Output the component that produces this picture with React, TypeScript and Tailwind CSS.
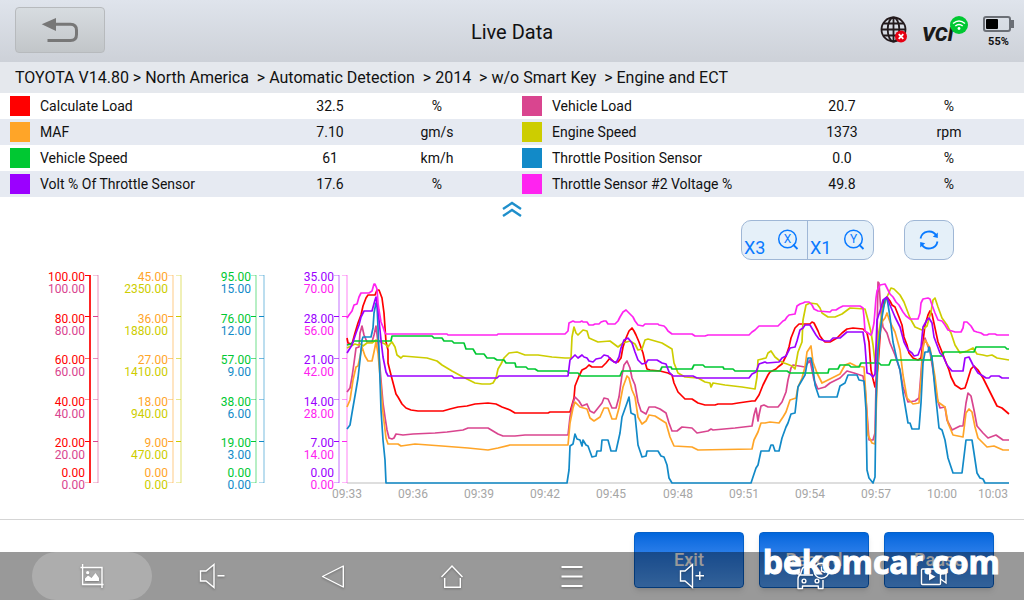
import type { ReactNode } from "react"
import clsx from "clsx"

type Reading = {
  name: string
  value: string
  unit: string
  swatch: string
}

const leftReadings: Reading[] = [
  { name: "Calculate Load", value: "32.5", unit: "%", swatch: "bg-[#ff0000]" },
  { name: "MAF", value: "7.10", unit: "gm/s", swatch: "bg-[#ffa528]" },
  { name: "Vehicle Speed", value: "61", unit: "km/h", swatch: "bg-[#00c832]" },
  { name: "Volt % Of Throttle Sensor", value: "17.6", unit: "%", swatch: "bg-[#9b00ff]" },
]

const rightReadings: Reading[] = [
  { name: "Vehicle Load", value: "20.7", unit: "%", swatch: "bg-[#d9458f]" },
  { name: "Engine Speed", value: "1373", unit: "rpm", swatch: "bg-[#cdcd00]" },
  { name: "Throttle Position Sensor", value: "0.0", unit: "%", swatch: "bg-[#128ac8]" },
  { name: "Throttle Sensor #2 Voltage %", value: "49.8", unit: "%", swatch: "bg-[#ff23f0]" },
]

// Each pair of axes shares one column of labels
const axes = [
  {
    x: 90,
    first: { color: "#ff0000", active: true, labels: ["100.00", "80.00", "60.00", "40.00", "20.00", "0.00"] },
    second: { color: "#d9458f", active: false, labels: ["100.00", "80.00", "60.00", "40.00", "20.00", "0.00"] },
  },
  {
    x: 173,
    first: { color: "#ffa528", active: false, labels: ["45.00", "36.00", "27.00", "18.00", "9.00", "0.00"] },
    second: { color: "#cdcd00", active: false, labels: ["2350.00", "1880.00", "1410.00", "940.00", "470.00", "0.00"] },
  },
  {
    x: 256,
    first: { color: "#00c832", active: false, labels: ["95.00", "76.00", "57.00", "38.00", "19.00", "0.00"] },
    second: { color: "#128ac8", active: false, labels: ["15.00", "12.00", "9.00", "6.00", "3.00", "0.00"] },
  },
  {
    x: 339,
    first: { color: "#9b00ff", active: false, labels: ["35.00", "28.00", "21.00", "14.00", "7.00", "0.00"] },
    second: { color: "#ff23f0", active: false, labels: ["70.00", "56.00", "42.00", "28.00", "14.00", "0.00"] },
  },
]

const ticks = [
  { y: 275.5, label: 281, opacity: 0.3 },
  { y: 316.5, label: 323, opacity: 1 },
  { y: 358.5, label: 364, opacity: 0.6 },
  { y: 399.5, label: 406, opacity: 0.45 },
  { y: 441.5, label: 447, opacity: 1 },
  { y: 482.5, label: 477, opacity: 0.3 },
]

const times = [
  { x: 347, text: "09:33" },
  { x: 413, text: "09:36" },
  { x: 479, text: "09:39" },
  { x: 545, text: "09:42" },
  { x: 611, text: "09:45" },
  { x: 678, text: "09:48" },
  { x: 744, text: "09:51" },
  { x: 810, text: "09:54" },
  { x: 876, text: "09:57" },
  { x: 942, text: "10:00" },
  { x: 993, text: "10:03" },
]

const traces = [
  {
    color: "#ff0000",
    points:
      "347,338 348,343 352,344 355,333 358,323 361,315 363,306 366,298 368,295 375,295 377,290 379,290 382,298 384,313 386,342 388,350 388,363 391,375 396,394 398,397 402,404 406,408 411,410 418,411 443,411 450,409 458,407 467,406 475,404 488,403 496,404 502,407 510,410 515,413 548,413 550,412 570,412 572,405 574,398 575,386 579,376 582,370 586,368 589,365 592,367 602,367 606,363 610,358 614,362 618,362 621,358 623,347 626,338 629,331 632,328 634,331 636,335 639,342 643,353 645,362 647,369 650,370 660,371 668,373 672,375 674,383 678,392 681,395 685,399 692,399 698,403 705,405 715,405 718,404 732,404 738,403 752,401 755,401 759,395 763,385 768,375 770,372 776,369 778,367 782,364 786,356 789,347 791,338 795,328 799,324 810,324 812,322 814,323 818,331 820,336 823,340 825,342 830,342 837,338 842,333 847,329 853,328 863,329 867,333 869,342 871,370 873,379 875,387 878,367 880,337 882,313 884,300 887,297 890,301 892,305 895,307 899,317 902,325 904,337 907,345 909,353 913,358 918,360 921,358 923,342 925,325 928,315 930,311 932,314 935,328 938,342 942,352 945,360 949,370 951,377 955,385 961,389 965,388 967,382 971,369 974,366 978,370 983,378 988,388 993,398 997,406 1002,408 1009,414",
  },
  {
    color: "#d9458f",
    points:
      "347,392 350,388 352,377 354,363 356,348 359,347 360,333 362,326 364,335 367,342 372,342 374,335 376,326 378,343 381,380 383,403 385,417 387,430 389,438 392,439 394,438 396,434 403,435 413,434 435,433 447,432 463,430 468,428 488,428 493,431 498,434 503,436 515,436 525,435 568,435 570,417 573,403 575,397 579,401 582,406 587,404 590,411 594,413 598,408 602,403 604,398 608,399 612,408 616,408 619,397 622,375 624,365 627,361 630,368 632,378 635,385 638,402 641,411 646,414 649,407 655,407 660,409 666,413 669,423 672,431 677,431 682,427 692,428 697,433 708,431 711,429 713,430 735,428 752,426 754,415 756,408 758,421 759,415 761,406 764,405 768,407 778,407 782,402 786,392 788,380 791,368 793,365 805,367 810,360 812,370 814,380 818,389 825,387 830,383 840,378 847,371 854,373 863,376 865,387 867,413 869,440 873,440 875,433 877,337 878,282 879,283 881,313 883,327 887,333 890,343 895,355 900,370 903,387 908,402 915,401 919,398 921,373 923,345 925,338 930,352 933,370 937,398 940,408 945,407 947,420 952,430 960,426 963,426 966,403 968,393 971,396 974,410 977,426 983,433 988,438 996,435 1003,440 1009,440",
  },
  {
    color: "#ffa528",
    points:
      "347,407 350,400 353,380 356,367 358,366 360,357 362,347 365,356 368,361 372,361 374,352 376,342 378,353 381,387 383,413 386,438 388,444 398,444 401,446 415,444 442,446 468,448 488,450 498,448 510,445 568,445 570,423 573,408 575,402 580,407 587,409 590,418 594,421 600,417 604,408 608,408 612,419 616,419 619,408 623,387 627,376 629,378 632,390 635,397 638,417 642,424 646,421 649,415 655,416 666,423 670,437 674,446 692,447 698,450 752,449 754,440 758,432 761,423 765,423 770,422 779,423 783,417 786,412 790,400 796,398 798,387 802,378 805,367 807,352 811,346 813,362 817,373 822,383 830,379 840,374 845,365 850,363 856,366 864,367 866,397 868,435 872,443 875,444 877,387 879,337 882,322 885,318 887,313 890,322 895,332 900,350 903,375 907,398 913,404 919,403 921,380 923,348 925,340 930,348 935,377 938,402 945,407 948,423 953,435 963,437 966,413 969,409 972,412 975,427 978,438 987,447 994,446 1003,450 1009,450",
  },
  {
    color: "#cdcd00",
    points:
      "347,348 355,344 358,345 361,344 363,346 367,343 372,343 376,340 385,344 388,347 390,344 392,342 395,347 397,355 401,358 403,356 415,357 427,358 437,361 442,365 452,371 463,377 475,383 482,384 490,384 493,383 496,378 498,369 501,364 504,358 509,353 517,352 525,355 538,355 552,357 565,358 571,358 572,337 574,327 576,333 578,335 581,332 583,330 587,331 589,338 598,342 610,341 618,347 623,343 630,341 635,344 638,350 642,349 645,340 648,339 662,343 672,349 674,363 678,373 685,377 698,378 705,382 710,383 711,387 713,383 725,385 742,387 755,389 757,377 758,360 762,359 766,358 768,353 771,351 775,357 780,361 784,363 787,364 792,366 795,369 798,352 802,342 803,320 806,305 810,303 817,304 820,308 822,313 828,317 835,317 842,314 850,308 865,309 868,320 871,332 873,345 875,362 878,337 883,308 887,297 891,288 894,289 900,295 904,302 907,310 910,318 915,327 922,330 927,326 931,312 933,300 935,298 938,307 942,318 947,325 951,333 955,345 960,353 967,351 973,348 977,354 983,355 987,356 992,355 997,358 1009,360",
  },
  {
    color: "#00c832",
    points:
      "347,345 351,344 354,341 391,341 392,336 432,336 434,338 442,338 444,341 452,341 454,343 464,343 466,349 473,349 476,354 484,354 487,358 494,358 497,360 504,360 506,363 515,363 516,367 526,367 528,369 535,369 538,371 567,371 569,373 578,373 581,376 620,376 622,371 660,371 662,367 671,367 672,369 692,369 694,365 703,365 705,367 723,367 724,369 733,369 735,371 787,371 790,373 828,373 829,369 838,369 840,365 849,365 851,367 859,367 861,363 879,363 881,365 889,365 891,360 931,360 932,356 942,356 944,352 974,352 976,347 1005,347 1007,349 1009,349",
  },
  {
    color: "#128ac8",
    points:
      "347,429 350,425 352,413 356,390 358,378 360,360 362,340 363,337 371,337 373,328 374,313 376,303 377,305 379,350 381,410 383,440 385,460 386,483 567,483 569,470 570,446 573,444 575,434 577,439 580,440 582,446 583,440 586,445 588,446 592,457 596,456 597,451 601,451 602,440 608,440 611,451 616,451 620,433 622,417 627,403 629,397 631,413 635,415 638,445 642,457 646,456 647,451 658,451 661,456 664,457 667,465 669,478 672,483 751,483 753,477 756,468 758,465 761,451 769,451 771,445 773,445 775,451 779,451 782,438 786,427 788,423 791,414 795,413 798,387 805,375 808,358 811,358 813,368 815,385 819,397 837,397 840,386 845,383 848,375 857,375 859,380 864,381 866,410 867,470 869,478 873,483 875,477 876,403 878,350 882,317 885,300 887,298 890,317 893,342 897,360 900,370 903,393 908,423 910,423 912,429 919,429 921,403 923,363 925,352 928,352 929,347 932,358 935,390 939,428 942,430 945,440 948,458 953,473 962,473 966,440 972,440 974,453 977,473 980,478 983,479 985,483 1009,483",
  },
  {
    color: "#9b00ff",
    points:
      "347,353 352,345 356,333 359,325 361,317 364,311 372,311 375,300 376,297 378,310 381,340 383,357 384,362 386,372 388,376 452,376 454,378 497,378 499,376 568,376 570,360 572,358 575,355 578,358 582,355 584,357 587,358 589,361 593,362 596,359 601,358 604,355 608,356 611,360 616,363 619,357 621,348 624,340 628,338 632,343 635,352 638,360 642,364 646,363 648,360 657,360 662,363 666,364 669,372 673,376 693,376 697,378 749,378 752,374 756,372 759,364 765,362 767,363 779,362 782,358 786,356 790,348 795,347 797,341 800,330 803,328 805,325 810,325 813,330 816,335 819,339 825,341 830,341 833,338 840,338 847,332 863,332 865,345 867,373 870,374 873,377 875,374 876,347 877,320 881,308 883,300 887,297 890,305 895,317 900,327 904,342 908,350 912,353 914,356 918,355 921,347 923,327 927,320 929,318 932,323 934,337 937,345 940,353 943,356 947,365 952,371 963,371 965,358 969,357 973,365 978,373 983,376 986,378 989,378 991,376 999,376 1002,378 1009,378",
  },
  {
    color: "#ff23f0",
    points:
      "347,318 349,315 352,311 354,305 357,304 359,297 361,293 369,293 372,291 374,284 375,284 377,289 378,303 379,310 381,322 383,327 385,333 386,334 447,334 448,335 497,335 498,334 565,334 568,331 569,323 573,321 575,322 580,322 582,321 583,322 587,322 589,325 593,325 595,324 599,324 601,322 604,321 606,321 608,324 615,324 618,321 620,317 623,312 626,310 628,312 630,314 633,317 635,321 638,325 643,326 645,324 658,324 659,325 664,326 666,328 668,331 672,334 692,334 695,336 705,336 708,335 749,335 752,332 755,330 759,326 778,326 781,323 783,321 785,320 787,317 789,315 795,314 797,306 800,304 803,303 805,302 809,302 812,305 814,309 818,311 830,312 832,310 836,310 839,308 843,306 860,306 863,308 864,317 865,331 868,333 871,335 872,333 874,323 876,298 877,291 880,285 885,284 887,288 890,294 893,297 896,302 899,305 903,312 906,316 910,319 918,319 920,313 921,303 923,299 928,298 930,299 932,305 935,313 938,320 942,321 945,325 948,330 952,331 955,332 961,332 963,328 964,322 967,322 971,326 974,331 977,332 981,333 984,335 987,335 989,334 995,334 997,335 1009,335",
  },
]

function ReadingTable({ readings, label }: { readings: Reading[]; label: string }) {
  return (
    <table aria-label={label} className="w-full table-fixed border-collapse text-sm">
      <colgroup>
        <col className="w-10" />
        <col />
        <col className="w-[108px]" />
        <col className="w-[106px]" />
        <col className="w-[22px]" />
      </colgroup>
      <tbody>
        {readings.map((reading) => (
          <tr key={reading.name} className="h-[26px] odd:bg-white even:bg-[#e6eaf2]">
            <td className="p-0 pl-2.5">
              <div className={clsx("size-5", reading.swatch)} />
            </td>
            <th scope="row" className="p-0 text-left font-normal whitespace-nowrap">
              {reading.name}
            </th>
            <td className="p-0 text-center">{reading.value}</td>
            <td className="p-0 text-center">{reading.unit}</td>
            <td className="p-0" />
          </tr>
        ))}
      </tbody>
    </table>
  )
}

function Axis({ x, color, active }: { x: number; color: string; active: boolean }) {
  return (
    <g stroke={color}>
      <line x1={x} x2={x} y1="275" y2="483" strokeWidth="2" opacity={active ? 0.85 : 0.28} />
      {ticks.map((tick) => (
        <line key={tick.y} x1={x - 5} x2={x} y1={tick.y} y2={tick.y} opacity={active && tick.y < 300 ? 1 : tick.opacity} />
      ))}
    </g>
  )
}

function Chart() {
  return (
    <svg viewBox="0 264 1024 241" className="mt-1 w-full" role="img" aria-label="Live data graph">
      <line x1="347" x2="1009" y1="483" y2="483" stroke="#dedede" strokeWidth="2" />
      {axes.map((pair) => (
        <g key={pair.x}>
          <Axis x={pair.x} color={pair.first.color} active={pair.first.active} />
          <Axis x={pair.x + 8} color={pair.second.color} active={pair.second.active} />
          {ticks.map((tick, i) => (
            <g key={tick.y} fontSize="12" textAnchor="end">
              <text x={pair.x - 5} y={tick.label} fill={pair.first.color}>
                {pair.first.labels[i]}
              </text>
              <text x={pair.x - 5} y={tick.label + 12} fill={pair.second.color}>
                {pair.second.labels[i]}
              </text>
            </g>
          ))}
        </g>
      ))}
      {times.map((time) => (
        <text key={time.text} x={time.x} y="498" fontSize="12" textAnchor="middle" fill="#a6a6a6">
          {time.text}
        </text>
      ))}
      {traces.map((trace) => (
        <polyline
          key={trace.color}
          points={trace.points}
          fill="none"
          stroke={trace.color}
          strokeWidth="1.7"
          strokeLinejoin="round"
        />
      ))}
    </svg>
  )
}

function ZoomIcon({ axis }: { axis: string }) {
  return (
    <svg viewBox="0 0 22 22" className="size-[22px]" aria-hidden="true">
      <circle cx="10.5" cy="10" r="8.8" fill="none" stroke="#0a7aff" strokeWidth="1.5" />
      <path d="M16 15.5l4.5 4.5" stroke="#0a7aff" strokeWidth="1.8" />
      <text x="10.5" y="14" fontSize="12" textAnchor="middle" fill="#0a7aff">
        {axis}
      </text>
    </svg>
  )
}

function NavIcon({ children }: { children: ReactNode }) {
  return (
    <svg
      viewBox="0 0 40 28"
      className="h-7 w-10 drop-shadow-[0_1px_1px_rgba(0,0,0,0.3)]"
      fill="none"
      stroke="#fff"
      strokeWidth="1.4"
      aria-hidden="true"
    >
      {children}
    </svg>
  )
}

const navItems = [
  {
    label: "Screenshot",
    icon: (
      <>
        <path d="M10.6 2v20.5h21M8.5 5.5H30V26" />
        <circle cx="15.7" cy="10.7" r="1.6" fill="#fff" stroke="none" />
        <path d="M13 19v-2.5l3-3 3.5 2.5 4-5 3.5 5v3z" fill="#fff" stroke="none" />
      </>
    ),
  },
  { label: "Volume down", icon: <path d="M8.5 9H14l8-6.5v23L14 19H8.5zM25.5 13.7h7" /> },
  { label: "Back", icon: <path d="M10.5 14.5L31.3 4v21z" strokeLinejoin="round" /> },
  { label: "Home", icon: <path d="M9.5 15L20 4l10.5 11M12.7 16v9.3h15.600V16" /> },
  { label: "Menu", icon: <path d="M9.5 5h21M9.5 14.5h21M9.5 24h21" strokeWidth="2" /> },
  { label: "Volume up", icon: <path d="M8.5 9H13l7.5-6.5v23L13 19H8.5zM23.5 13.7H32M27.8 9.5V18" /> },
  {
    label: "Vehicle diagnostics",
    icon: (
      <>
        <path d="M21 5h-8c-2 0-2.5 1-3 2.5L8.3 13C6.5 13.5 6 15 6 17v9.5h4.5V24h15.8v2.5H31V18" strokeLinejoin="round" />
        <path d="M9 13h12M5 11.5l3 1" />
        <circle cx="12" cy="19" r="1.9" />
        <circle cx="25" cy="19" r="1.9" />
        <circle cx="29.5" cy="8.7" r="7.5" />
        <path d="M29.5 4.5V9l4 1.5" />
      </>
    ),
  },
  {
    label: "Record screen",
    icon: (
      <>
        <rect x="9.5" y="7" width="19" height="15.5" rx="1" />
        <path d="M28.5 12.5l5.5-4V21l-5.5-4" />
        <path d="M17 11l6.5 3.7-6.5 3.7z" fill="#fff" stroke="none" />
      </>
    ),
  },
]

export default function App() {
  return (
    <div className="relative flex min-h-screen flex-col bg-white font-[Roboto,sans-serif] text-[#111]">
      <header className="grid h-[62px] grid-cols-[1fr_auto_1fr] items-center bg-linear-to-b from-[#dfe4ec] to-[#cdd1d8] px-2.5">
        <button
          aria-label="Back"
          className="mb-0.5 ml-[5px] flex h-[46px] w-[90px] items-center justify-center rounded-sm border border-[#b7babd] bg-linear-to-b from-[#d7dce0] to-[#c2c6c9]"
        >
          <svg viewBox="0 0 38 26" className="h-[26px] w-[38px]" aria-hidden="true">
            <path d="M0.7 7.3L15 1v13z" fill="#777" />
            <path d="M14 7.3H29.5Q35.5 7.3 35.5 13.3V17.5Q35.5 23.5 29.5 23.5H6.5" fill="none" stroke="#777" strokeWidth="3" />
          </svg>
        </button>
        <h1 className="pt-0.5 text-xl">Live Data</h1>
        <div className="flex items-center justify-end gap-[15px]">
          <svg viewBox="0 0 27 28" className="mb-0.5 h-7 w-[27px]" role="img" aria-label="No internet connection">
            <g fill="none" stroke="#231a1c" strokeWidth="1.8">
              <circle cx="13.5" cy="13.5" r="12" />
              <ellipse cx="13.5" cy="13.5" rx="5.8" ry="12" />
              <path d="M13.5 1.5v24M1.5 13.5h24M3.5 7.5h20M3.5 19.5h20" />
            </g>
            <circle cx="21" cy="20.5" r="6" fill="#e60012" />
            <path d="M18.7 18.2l4.6 4.6M23.3 18.2l-4.6 4.6" stroke="#fff" strokeWidth="1.8" />
          </svg>
          <div className="relative mt-1.5 w-[46px] text-xl leading-5 font-black text-[#1a1a1a] italic">
            VCI
            <svg viewBox="0 0 18 18" className="absolute -top-2 right-0 size-[18px]" aria-hidden="true">
              <circle cx="9" cy="9" r="9" fill="#00c832" />
              <g fill="none" stroke="#fff" strokeWidth="1.5">
                <path d="M3 7.5Q9 2.5 15 7.5" />
                <path d="M5.3 10Q9 7 12.7 10" />
              </g>
              <circle cx="9" cy="12.5" r="1.4" fill="#fff" />
            </svg>
          </div>
          <div className="flex flex-col items-center pt-0.5">
            <svg viewBox="0 0 31 16" className="h-4 w-[31px]" aria-hidden="true">
              <rect x="1" y="1" width="26" height="14" rx="2" fill="none" stroke="#6b6f76" strokeWidth="2" />
              <rect x="28" y="4" width="3" height="8" fill="#6b6f76" />
              <rect x="3" y="3" width="12" height="10" rx="1" fill="#000" />
            </svg>
            <span className="mt-1 text-[11px] leading-3 font-bold">55%</span>
          </div>
        </div>
      </header>

      <nav aria-label="Breadcrumb" className="h-[31px] bg-[#e5e8ed] px-[15px] text-base leading-[31px] whitespace-pre">
        {"TOYOTA V14.80 > North America  > Automatic Detection  > 2014  > w/o Smart Key  > Engine and ECT"}
      </nav>

      <div className="grid grid-cols-2">
        <ReadingTable readings={leftReadings} label="Readings, first column" />
        <ReadingTable readings={rightReadings} label="Readings, second column" />
      </div>

      <main className="flex flex-1 flex-col">
        <button aria-label="Collapse readings" className="flex h-[23px] items-center justify-center self-center">
          <svg viewBox="0 0 20 16" className="h-4 w-5" fill="none" stroke="#1f8fcb" strokeWidth="2.4" aria-hidden="true">
            <path d="M1 8l9-6 9 6M1 15l9-6 9 6" />
          </svg>
        </button>
        <div className="flex h-10 justify-end gap-[30px] pr-[70px] text-lg text-[#0a7aff]">
          <div className="flex divide-x divide-[#9fb7d6] rounded-[10px] border border-[#9fb7d6] bg-[#e5f0f9]">
            <button aria-label="Zoom X axis" className="flex w-[66px] items-center gap-3 pl-0.5">
              <span className="self-end leading-[22px]">X3</span>
              <ZoomIcon axis="X" />
            </button>
            <button aria-label="Zoom Y axis" className="flex w-[65px] items-center gap-3 pl-0.5">
              <span className="self-end leading-[22px]">X1</span>
              <ZoomIcon axis="Y" />
            </button>
          </div>
          <button
            aria-label="Reset zoom"
            className="flex w-[50px] items-center justify-center rounded-[10px] border border-[#9fb7d6] bg-[#e5f0f9]"
          >
            <svg viewBox="0 0 20 20" className="size-5" fill="none" stroke="#0a7aff" strokeWidth="1.8" aria-hidden="true">
              <path d="M1.5 8.5A8.6 8.6 0 0 1 17.5 6M18.5 11.5A8.6 8.6 0 0 1 2.5 14" />
              <path d="M18.8 2.5V8l-5-1.2zM1.2 17.5V12l5 1.2z" fill="#0a7aff" stroke="none" />
            </svg>
          </button>
        </div>
        <Chart />
      </main>

      <footer className="flex h-[81px] justify-end gap-[15px] border-t border-[#d5d5d5] py-3 pr-[30px] text-lg font-medium text-white">
        {["Exit", "Record", "Pause"].map((action) => (
          <button
            key={action}
            className="w-[110px] rounded-sm border border-[#0560c8] bg-linear-to-b from-[#0066dc] to-[#55a3ff] shadow-md"
          >
            {action}
          </button>
        ))}
      </footer>

      {/* System navigation bar, drawn over the app's own buttons */}
      <nav aria-label="System" className="absolute inset-x-0 bottom-0 grid h-12 grid-cols-8 bg-black/40 px-8">
        {navItems.map((item, index) => (
          <button
            key={item.label}
            aria-label={item.label}
            className={clsx("flex items-center justify-center", index === 0 && "rounded-3xl bg-white/20")}
          >
            <NavIcon>{item.icon}</NavIcon>
          </button>
        ))}
      </nav>

      <div className="pointer-events-none absolute right-6 bottom-4 font-['Open_Sans',sans-serif] text-[32px] leading-11 font-bold text-white [-webkit-text-stroke:1px_white]">
        bekomcar.com
      </div>
    </div>
  )
}
